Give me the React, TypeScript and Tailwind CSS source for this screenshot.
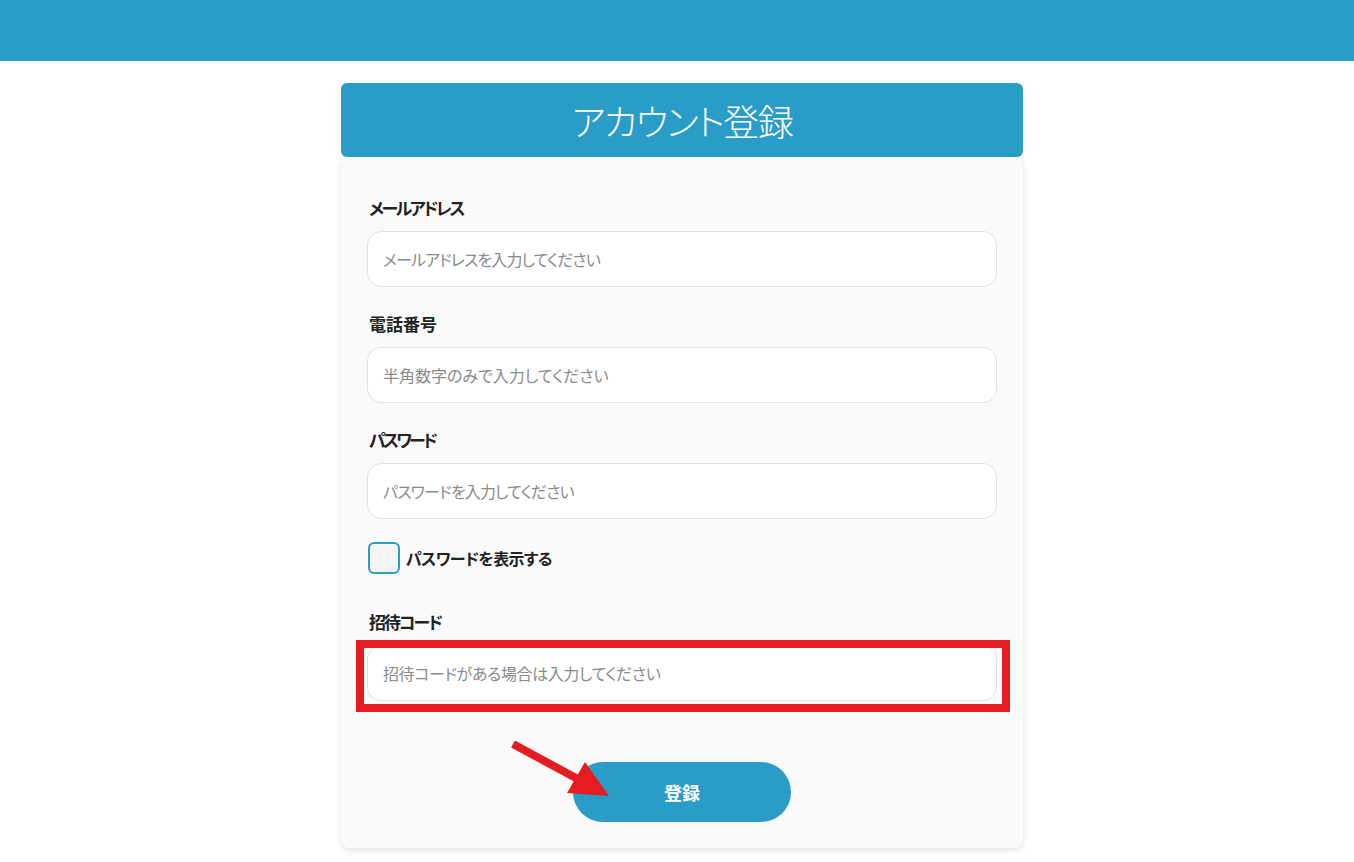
import React from 'react';

const font = { fontFamily: '"Noto Sans CJK JP", "Noto Sans", sans-serif' };

function Field({
  label,
  placeholder,
  type = 'text',
  labelTrack = '',
  phTrack = '',
}: {
  label: string;
  placeholder: string;
  type?: string;
  labelTrack?: string;
  phTrack?: string;
}) {
  return (
    <div className="flex flex-col">
      <label className={`ml-[2px] text-[17px] leading-6 font-bold text-[#222] [font-feature-settings:'palt'] ${labelTrack}`}>{label}</label>
      <input
        type={type}
        placeholder={placeholder}
        className={`mt-[11px] h-[56px] w-full rounded-[14px] border border-[#e2e2e2] bg-white px-[15px] text-[16px] text-[#333] placeholder:text-[#8a8a8a] outline-none [font-feature-settings:'palt'] ${phTrack}`}
      />
    </div>
  );
}

export default function App() {
  return (
    <div className="min-h-[862px] bg-white" style={font}>
      {/* top bar */}
      <div className="h-[61px] bg-[#2a9cc8]" />

      <div className="pl-[10px]">
        <div className="mx-auto mt-[22px] w-[682px]">
          <div className="flex h-[74px] items-center justify-center rounded-[6px] bg-[#2a9cc8]">
            <h1 className="text-[36px] font-light leading-none tracking-[-1.5px] text-white [font-feature-settings:'palt']">アカウント登録</h1>
          </div>

          <div className="relative rounded-[8px] bg-[#fafafa] px-[26px] pb-[26px] pt-[39px] shadow-[0_2px_6px_rgba(0,0,0,0.12)]">
            <div className="flex flex-col gap-[25px]">
              <Field label="メールアドレス" placeholder="メールアドレスを入力してください" labelTrack="tracking-[-2.4px]" phTrack="tracking-[-0.9px]" />
              <Field label="電話番号" placeholder="半角数字のみで入力してください" />
              <Field label="パスワード" placeholder="パスワードを入力してください" type="password" labelTrack="tracking-[-2.8px]" phTrack="tracking-[-0.85px]" />
            </div>

            <label className="mt-[23px] ml-[1px] flex items-center gap-[6px]">
              <span className="block h-[32px] w-[32px] rounded-[6px] border-2 border-[#2a9cc8] bg-[#f4f4f4]" />
              <span className="text-[16px] font-bold tracking-[-0.6px] text-[#222] [font-feature-settings:'palt']">パスワードを表示する</span>
            </label>

            <div className="relative mt-[36px]">
              <Field label="招待コード" placeholder="招待コードがある場合は入力してください" labelTrack="tracking-[-2px]" phTrack="tracking-[-0.4px]" />
              {/* annotation frame */}
              <div className="pointer-events-none absolute left-[-11px] right-[-13px] top-[30px] bottom-[-11px] border-[8px] border-[#e51c21]" />
            </div>

            <div className="mt-[61px] flex justify-center">
              <button className="h-[60px] w-[218px] rounded-full bg-[#2a9cc8] text-[18px] font-bold text-white">登録</button>
            </div>

            {/* annotation arrow */}
            <svg className="pointer-events-none absolute left-[168px] top-[584px]" width="110" height="62" viewBox="0 0 110 62">
              <line x1="4" y1="3" x2="78" y2="43" stroke="#e51c21" strokeWidth="8" />
              <polygon points="76,21 100,55 58,52" fill="#e51c21" />
            </svg>
          </div>
        </div>
      </div>
    </div>
  );
}
